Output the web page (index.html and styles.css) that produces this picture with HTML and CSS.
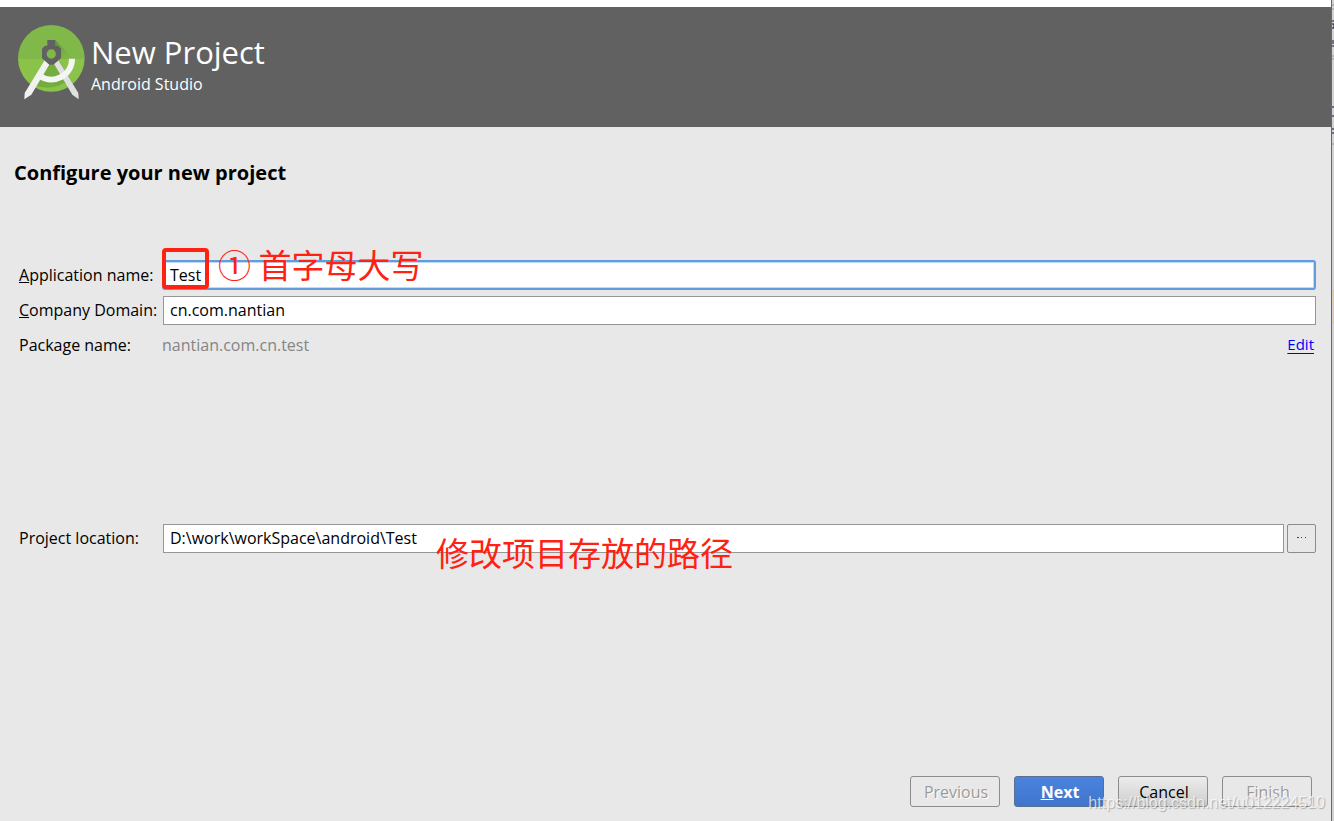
FILE: index.html
```html
<!DOCTYPE html>
<html lang="zh-CN">
<head>
<meta charset="utf-8">
<meta name="viewport" content="width=device-width, initial-scale=1">
<title>New Project</title>
<link rel="stylesheet" href="styles.css">
</head>
<body>
<div class="screen">
  <main class="wizard">
    <header class="banner">
      <svg class="logo" viewBox="21 18 204 231" aria-hidden="true">
        <defs>
          <clipPath id="disc"><circle cx="124" cy="121" r="100"/></clipPath>
          <linearGradient id="shade" x1="0" y1="0" x2="1" y2="1"><stop offset="0" stop-color="#5c9436"/><stop offset="1" stop-color="#7cb342" stop-opacity="0"/></linearGradient>
        </defs>
        <g clip-path="url(#disc)">
          <rect x="21" y="18" width="204" height="105" fill="#80b849"/>
          <rect x="21" y="123" width="204" height="100" fill="#8bc34a"/>
          <path d="M136 67L192 123H136Z" fill="url(#shade)"/>
          <path d="M108 132L70 200Q120 220 160 196L190 200L150 132Z" fill="#5f9a35" opacity=".55"/>
        </g>
        <path d="M131 136L145 127L205 225L206 244L187 230Z" fill="#e0e0e0"/>
        <path d="M186 122A62 62 0 0 1 88 173" fill="none" stroke="#f5f5f5" stroke-width="18"/>
        <path d="M104 127L119 138L64 230L43 244L44 225Z" fill="#f1f1f1"/>
        <path fill="#616161" fill-rule="evenodd" d="M112 66H136V83H144L153 92V121L130 140H118L96 121V92L105 83H112ZM124 94A14 14 0 1 0 124 122A14 14 0 1 0 124 94Z"/>
      </svg>
      <div class="titles">
        <h1 class="title">New Project</h1>
        <p class="subtitle">Android Studio</p>
      </div>
    </header>

    <form class="content">
      <h2 class="heading">Configure your new project</h2>
      <div class="row">
        <label class="label" for="app"><u>A</u>pplication name:</label>
        <div class="field">
          <input class="input focused" id="app" type="text" value="Test">
          <span class="mark-box"></span>
          <span class="note note-name">① 首字母大写</span>
        </div>
      </div>
      <div class="row">
        <label class="label" for="domain"><u>C</u>ompany Domain:</label>
        <div class="field"><input class="input" id="domain" type="text" value="cn.com.nantian"></div>
      </div>
      <div class="row">
        <span class="label">Package name:</span>
        <div class="field package"><span class="muted">nantian.com.cn.test</span><a class="edit" href="#">Edit</a></div>
      </div>
      <div class="row location">
        <label class="label" for="path">Project location:</label>
        <div class="field">
          <input class="input" id="path" type="text" value="D:\work\workSpace\android\Test">
          <button class="browse" type="button" aria-label="Browse"><svg class="dots" viewBox="0 0 10 2" aria-hidden="true"><path d="M0 0h2v1H0zM4 0h1v1H4zM8 0h1v1H8z"/></svg></button>
          <span class="note note-path">修改项目存放的路径</span>
        </div>
      </div>
      <div class="actions">
        <button class="btn" type="button" disabled>Previous</button>
        <button class="btn primary" type="button"><u>N</u>ext</button>
        <button class="btn raised" type="button">Cancel</button>
        <button class="btn" type="button" disabled>Finish</button>
        <span class="watermark">https://blog.csdn.net/u012224510</span>
      </div>
    </form>
  </main>
  <svg class="edge" aria-hidden="true">
    <rect width="3" height="100%" fill="#d2d2d2"/>
    <path d="M1 5h2M1 9h2M1 56h2M1 59h2M1 144h2" stroke="#969696"/>
    <path d="M1 21h2M1 24h2v4h-2M2 40v4M1 46h2M1 107h2M1 116h2M2 128v2M1 133h2" stroke="#101030" fill="none"/>
    <rect x="2" y="289" width="1" height="35" fill="#dcc79c"/>
    <rect width="1" height="100%" fill="#2878bd"/>
  </svg>
</div>
</body>
</html>
```
FILE: styles.css
```css
* { box-sizing: border-box; }

body {
  margin: 0;
  background: #e8e8e8;
  color: #000;
  font: 16px/24px "Open Sans", "Noto Sans", "Noto Sans CJK SC", sans-serif;
}

.screen { display: flex; min-height: 100vh; }
.wizard {
  flex: 1;
  min-width: 0;
  display: flex;
  flex-direction: column;
  border-top: 7px solid #fff;
}
.edge { flex: none; align-self: stretch; width: 3px; height: auto; }

.banner {
  display: flex;
  align-items: flex-start;
  gap: 6px;
  height: 120px;
  padding: 17px;
  background: #616161;
  color: #fff;
}
.logo { flex: none; width: 68px; height: 77px; }
.titles { padding-top: 6px; }
.title { margin: 0; font-size: 31px; line-height: 44px; font-weight: 400; }
.subtitle { margin: 0; line-height: 20px; }

.content {
  flex: 1;
  display: flex;
  flex-direction: column;
  padding: 32px 15px 14px 19px;
}
.heading {
  margin: 0 0 73px -5px;
  font-size: 20px;
  line-height: 28px;
  font-weight: 700;
}
.row { display: flex; align-items: center; height: 30px; margin-bottom: 5px; }
.label { flex: none; width: 143px; white-space: nowrap; }
.field {
  position: relative;
  flex: 1;
  min-width: 0;
  display: flex;
  align-items: center;
  gap: 3px;
}
.input {
  flex: 1;
  min-width: 0;
  height: 29px;
  margin-left: 1px;
  padding: 0 6px;
  border: 1px solid #969696;
  border-radius: 0;
  background: #fff;
  color: #000;
  font: inherit;
  outline: none;
}
.focused {
  height: 30px;
  margin-left: 0;
  padding: 0 6px;
  border: 2px solid #609cde;
  border-radius: 3px;
  box-shadow: inset 0 0 0 1px #c0daf5;
}
.package { justify-content: space-between; padding-right: 2px; }
.muted { color: #858585; }
.edit { color: #00f; font-size: 15px; line-height: 28px; align-self: flex-start; text-underline-offset: 3px; }
.package { height: 30px; }
.location { margin-top: 158px; }
.browse {
  display: flex;
  align-items: center;
  justify-content: center;
  width: 29px;
  height: 29px;
  padding: 0;
  border: 1px solid #8c8c8c;
  border-radius: 2px;
  background: #e8e8e8;
}
.dots { width: 10px; height: 2px; fill: #444; }

.mark-box {
  position: absolute;
  left: 0;
  top: -12px;
  width: 47px;
  height: 41px;
  border: 4px solid #ff2112;
  border-radius: 4px;
}
.note {
  position: absolute;
  color: #ff2112;
  font: 400 33px/40px "Noto Sans CJK SC", sans-serif;
  white-space: nowrap;
  pointer-events: none;
}
.note-name { left: 56px; top: -16px; }
.note-path { left: 274px; top: 8px; }

.actions {
  position: relative;
  display: flex;
  justify-content: flex-end;
  gap: 14px;
  margin-top: auto;
  padding-right: 4px;
}
.btn {
  width: 90px;
  height: 31px;
  padding: 0 0 0 2px;
  border: 1px solid #8c8c8c;
  border-radius: 3px;
  background: #e8e8e8;
  color: #000;
  font: inherit;
}
.btn:disabled { color: #9b9b9b; text-shadow: 1px 1px #fff; }
.primary {
  border-color: #5a7090;
  background: linear-gradient(#4a83df, #3f75cb);
  color: #fff;
  font-weight: 700;
}
.raised { background: linear-gradient(#ececec, #cecece); }
.watermark {
  position: absolute;
  right: -9px;
  bottom: -6px;
  color: rgba(255, 255, 255, 0.7);
  font: 16px/20px "Liberation Sans", sans-serif;
  text-shadow: 1px 1px 1px rgba(90, 90, 90, 0.4);
  pointer-events: none;
}
```
